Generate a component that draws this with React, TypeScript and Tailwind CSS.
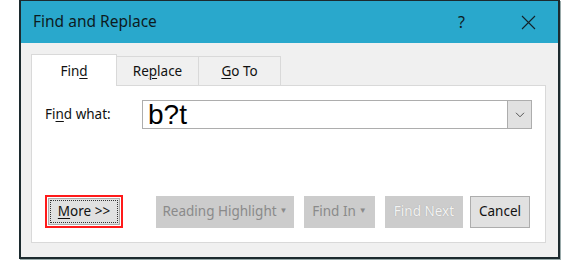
import { useState } from "react";

const UI_FONT = "font-['Noto_Sans','Open_Sans',sans-serif]";

const TABS = [
  { id: "find", key: "d", before: "Fin", after: "" },
  { id: "replace", key: "p", before: "Re", after: "lace" },
  { id: "goto", key: "G", before: "", after: "o To" },
];

const App = () => {
  const [tab, setTab] = useState("find");
  const [query, setQuery] = useState("b?t");

  return (
    <div className={`h-[264px] w-[580px] bg-white ${UI_FONT}`}>
      <div className="ml-[19px] flex h-[259px] w-[541px] flex-col border-x-2 border-t border-b-2 border-[#1c2a2e] shadow-[1px_1px_0_#9aa]">
        {/* title bar */}
        <header className="flex h-[42px] shrink-0 items-center bg-[#29a8cc] pl-[12px] text-[#0d1b1f]">
          <h1 className="text-[15.5px] leading-none">Find and Replace</h1>
          <button type="button" aria-label="Help" className="ml-auto mr-[55px] text-[16px] leading-none">
            ?
          </button>
          <button type="button" aria-label="Close" className="mr-[22px] flex h-[16px] w-[16px] items-center justify-center">
            <svg width="15" height="15" viewBox="0 0 15 15" fill="none" stroke="#14232a" strokeWidth="1.1">
              <path d="M1 1 L14 14 M14 1 L1 14" />
            </svg>
          </button>
        </header>

        <div className="flex-1 bg-[#f0f0f0] pl-[10px] pt-[11px]">
          {/* tabs */}
          <div className="relative z-10 flex items-end text-[13.5px] text-[#111]">
            {TABS.map((t) => {
              const active = tab === t.id;
              return (
                <button
                  key={t.id}
                  type="button"
                  onClick={() => setTab(t.id)}
                  className={
                    active
                      ? "-mb-px flex h-[32px] w-[86px] items-center justify-center border border-b-0 border-[#d9d9d9] bg-white pt-[1px]"
                      : "-ml-px flex h-[29px] w-[83px] items-center justify-center border border-b-0 border-[#d9d9d9] bg-[#f0f0f0] first:ml-0"
                  }
                >
                  {t.before}
                  <span className="underline underline-offset-[2px]">{t.key}</span>
                  {t.after}
                </button>
              );
            })}
          </div>

          {/* panel */}
          <div className="flex h-[158px] w-[515px] flex-col border border-[#d9d9d9] bg-white px-[13px] pt-[14px]">
            <div className="flex items-center">
              <label className="w-[99px] text-[13.5px] text-[#111]">
                Fi<span className="underline underline-offset-[2px]">n</span>d what:
              </label>
              <div className="flex h-[29px] w-[390px] border border-[#adadad]">
                <input
                  value={query}
                  onChange={(e) => setQuery(e.target.value)}
                  className="min-w-0 flex-1 pl-[5px] font-['Liberation_Sans',Arial,sans-serif] text-[28px] leading-none text-black outline-none"
                />
                <button
                  type="button"
                  aria-label="Recent searches"
                  className="flex w-[24px] items-center justify-center border-l border-[#adadad] bg-[#e1e1e1]"
                >
                  <svg width="10" height="6" viewBox="0 0 10 6" fill="none" stroke="#555" strokeWidth="1">
                    <path d="M1 0.8 L5 4.8 L9 0.8" />
                  </svg>
                </button>
              </div>
            </div>

            <div className="mt-auto mb-[14px] flex items-center text-[13.5px]">
              {/* highlight box around the More button */}
              <div className="flex h-[33px] w-[78px] border-2 border-[#ff1a1a] bg-white p-[1px]">
                <button
                  type="button"
                  className="flex h-full w-full border border-[#adadad] bg-[#e1e1e1] p-[1px] text-[#111]"
                >
                  <span className="flex h-full w-full items-center justify-center border border-dotted border-[#333]">
                    <span className="underline underline-offset-[2px]">M</span>ore &gt;&gt;
                  </span>
                </button>
              </div>

              <button type="button" disabled className="ml-[33px] flex h-[32px] w-[138px] items-center justify-center gap-[3px] bg-[#cccccc] text-[#8a8a8a]">
                Reading Highlight
                <span className="mb-[3px] text-[8px]">▼</span>
              </button>
              <button type="button" disabled className="ml-[10px] flex h-[32px] w-[71px] items-center justify-center gap-[3px] bg-[#cccccc] text-[#8a8a8a]">
                Find In
                <span className="mb-[3px] text-[8px]">▼</span>
              </button>
              <button type="button" disabled className="ml-[10px] flex h-[32px] w-[78px] items-center justify-center bg-[#cccccc] text-[#f4f4f4] [text-shadow:0_0_1px_#9a9a9a]">
                Find Next
              </button>
              <button type="button" className="ml-[7px] flex h-[32px] w-[60px] items-center justify-center border border-[#adadad] bg-[#e1e1e1] text-[#111]">
                Cancel
              </button>
            </div>
          </div>
        </div>
      </div>
    </div>
  );
};

export default App;
